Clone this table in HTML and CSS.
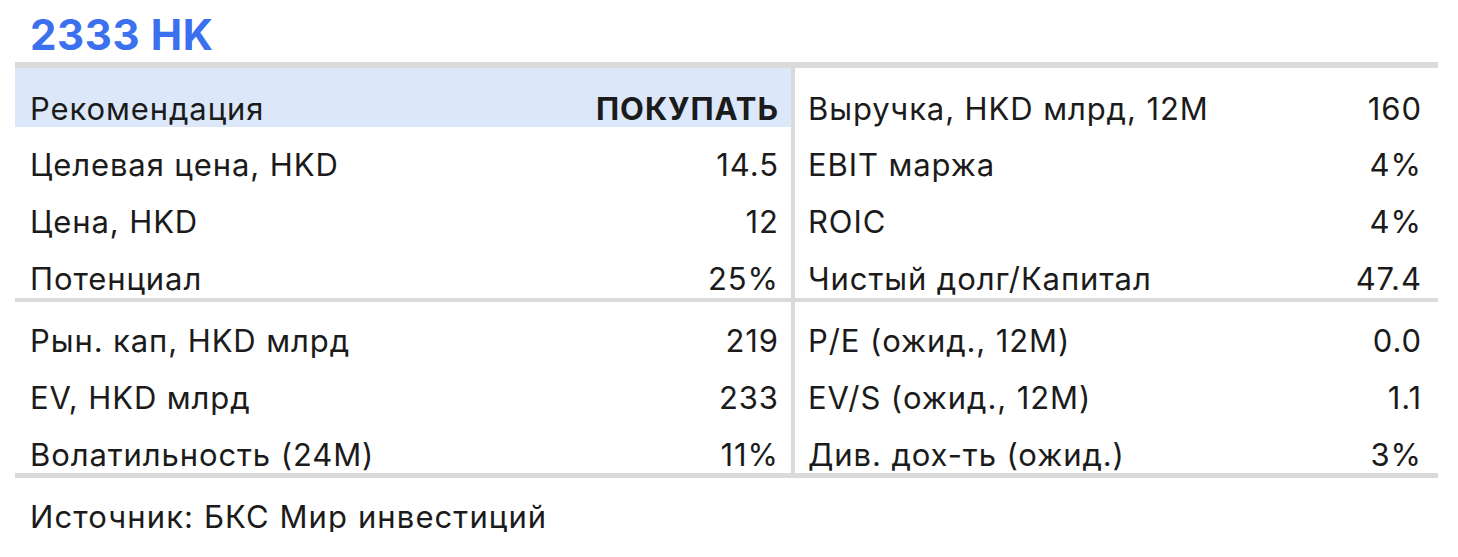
FILE: index.html
```html
<!DOCTYPE html>
<html lang="ru">
<head>
<meta charset="utf-8">
<link rel="stylesheet" href="styles.css">
</head>
<body>
<div class="page">
  <h1 class="title">2333 HK</h1>
  <div class="table">
    <div class="group group-top">
      <div class="col col-left">
        <div class="row row-head"><span class="label">Рекомендация</span><span class="value strong">ПОКУПАТЬ</span></div>
        <div class="row"><span class="label">Целевая цена, HKD</span><span class="value">14.5</span></div>
        <div class="row"><span class="label">Цена, HKD</span><span class="value">12</span></div>
        <div class="row"><span class="label">Потенциал</span><span class="value">25%</span></div>
      </div>
      <div class="col col-right">
        <div class="row row-head"><span class="label">Выручка, HKD млрд, 12M</span><span class="value">160</span></div>
        <div class="row"><span class="label">EBIT маржа</span><span class="value">4%</span></div>
        <div class="row"><span class="label">ROIC</span><span class="value">4%</span></div>
        <div class="row"><span class="label">Чистый долг/Капитал</span><span class="value">47.4</span></div>
      </div>
    </div>
    <div class="group group-bottom">
      <div class="col col-left">
        <div class="row"><span class="label">Рын. кап, HKD млрд</span><span class="value">219</span></div>
        <div class="row"><span class="label">EV, HKD млрд</span><span class="value">233</span></div>
        <div class="row"><span class="label">Волатильность (24M)</span><span class="value">11%</span></div>
      </div>
      <div class="col col-right">
        <div class="row"><span class="label">P/E (ожид., 12M)</span><span class="value">0.0</span></div>
        <div class="row"><span class="label">EV/S (ожид., 12M)</span><span class="value">1.1</span></div>
        <div class="row"><span class="label">Див. дох-ть (ожид.)</span><span class="value">3%</span></div>
      </div>
    </div>
  </div>
  <p class="source">Источник: БКС Мир инвестиций</p>
</div>
</body>
</html>
```
FILE: styles.css
```css
html, body {
  margin: 0;
  padding: 0;
  background: #ffffff;
}
body {
  font-family: Inter, "Liberation Sans", sans-serif;
  color: #1b1b1b;
}
.page {
  padding: 0 20px 0 15px;
}
.title {
  margin: 0;
  padding: 11px 0 0 15px;
  height: 51px;
  font-size: 42px;
  line-height: 48px;
  letter-spacing: 0.6px;
  font-weight: 700;
  color: #3b70ee;
}
.table {
  width: 1423px;
  border-top: 6px solid #dadada;
  border-bottom: 5px solid #dadada;
}
.group {
  display: grid;
  grid-template-columns: 776px 643px;
  column-gap: 4px;
  background: #dadada;
}
.group-top {
  border-bottom: 4px solid #dadada;
}
.col {
  background: #ffffff;
  display: flex;
  flex-direction: column;
}
.col-left .row {
  padding-left: 15px;
  padding-right: 13px;
}
.col-right .row {
  padding-left: 13px;
  padding-right: 17px;
}
.row {
  display: flex;
  justify-content: space-between;
  align-items: baseline;
  font-size: 31px;
  line-height: 30px;
  letter-spacing: 0.9px;
  box-sizing: border-box;
  height: 57px;
  padding-top: 23px;
}
.value {
  margin-right: -0.9px;
}
.group-top .row-head {
  height: 59px;
  padding-top: 26px;
}
.col-left .row-head {
  background: #dce8fa;
}
.group-bottom .row {
  padding-top: 24px;
}
.strong {
  font-weight: 700;
}
.source {
  margin: 0;
  padding: 24px 0 0 15px;
  font-size: 31px;
  line-height: 30px;
  letter-spacing: 1.1px;
}
```
